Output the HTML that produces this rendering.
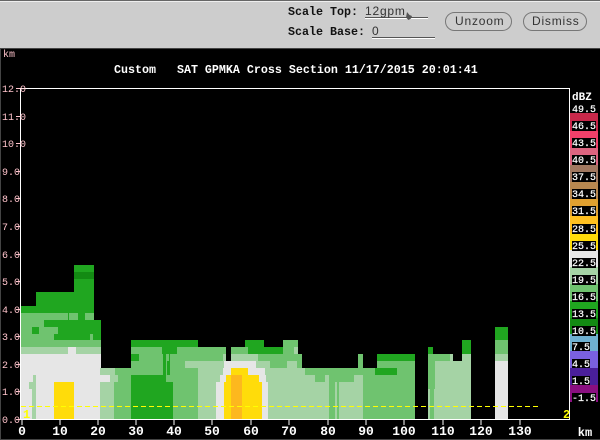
<!DOCTYPE html>
<html><head><meta charset="utf-8"><style>
html,body{margin:0;padding:0;background:#000;width:600px;height:440px;overflow:hidden}
svg{display:block}
text{white-space:pre}
.d{fill:#20a620}.k{fill:#138a13}.m{fill:#6fc36f}.l{fill:#a5d3a5}.g{fill:#e6e6e6}.y{fill:#ffdc0a}.o{fill:#fdb81e}.b{fill:#000}
.t{font:bold 11.67px "Liberation Mono",monospace;fill:#fff}
.x{font:bold 13px "Liberation Mono",monospace;fill:#fff;text-anchor:middle}
.p{font:10px "Liberation Mono",monospace;fill:#ffc4cc}
.c{font:10px "Liberation Mono",monospace;fill:#fff;stroke:#fff;stroke-width:.2px}
.h{font:bold 11.67px "Liberation Mono",monospace;fill:#111}
.s{font:12px "Liberation Sans",sans-serif;fill:#333;letter-spacing:.8px}
</style></head><body>
<svg width="600" height="440" viewBox="0 0 600 440" xmlns="http://www.w3.org/2000/svg">
<g shape-rendering="crispEdges">
<rect width="600" height="440" fill="#000"/>
<rect width="600" height="48" fill="#cdcdcd"/>
<rect width="600" height="1" fill="#666"/><rect y="1" width="600" height="1" fill="#eee"/>
<rect y="48" width="600" height="1" fill="#444"/>
<rect y="49" width="1" height="391" fill="#444"/><rect y="439" width="600" height="1" fill="#444"/>

<!-- left block -->
<rect class="d" x="74" y="265" width="20" height="7"/><rect class="k" x="74" y="272" width="20" height="7"/>
<rect class="d" x="74" y="279" width="20" height="13"/><rect class="d" x="36" y="292" width="58" height="14"/>
<rect class="d" x="21" y="306" width="73" height="7"/>
<rect class="m" x="21" y="313" width="47" height="7"/><rect class="d" x="68" y="313" width="1" height="7"/><rect class="m" x="69" y="313" width="9" height="7"/><rect class="d" x="78" y="313" width="7" height="7"/><rect class="m" x="85" y="313" width="9" height="7"/>
<rect class="m" x="21" y="320" width="23" height="7"/><rect class="d" x="44" y="320" width="57" height="7"/>
<rect class="m" x="21" y="327" width="37" height="7"/><rect class="d" x="32" y="327" width="7" height="7"/><rect class="d" x="58" y="327" width="43" height="7"/>
<rect class="m" x="21" y="334" width="33" height="6"/><rect class="d" x="54" y="334" width="36" height="6"/><rect class="m" x="90" y="334" width="3" height="6"/><rect class="d" x="93" y="334" width="8" height="6"/>
<rect class="m" x="21" y="340" width="80" height="7"/>
<rect class="l" x="21" y="347" width="47" height="7"/><rect class="g" x="68" y="347" width="8" height="7"/><rect class="l" x="76" y="347" width="25" height="7"/>
<rect class="g" x="21" y="354" width="80" height="65"/>
<rect class="l" x="33" y="375" width="3" height="7"/><rect class="l" x="29" y="382" width="7" height="7"/><rect class="l" x="32" y="389" width="4" height="30"/>
<rect class="y" x="54" y="382" width="20" height="37"/>
<!-- 100-150 -->
<rect class="l" x="100" y="368" width="15" height="7"/><rect class="g" x="100" y="375" width="10" height="7"/><rect class="l" x="110" y="375" width="8" height="7"/><rect class="l" x="100" y="382" width="14" height="37"/>
<rect class="m" x="115" y="368" width="16" height="7"/><rect class="m" x="118" y="375" width="13" height="7"/><rect class="m" x="114" y="382" width="17" height="37"/>
<rect class="d" x="131" y="375" width="19" height="44"/>
<rect class="d" x="131" y="340" width="19" height="7"/><rect class="m" x="131" y="347" width="19" height="28"/><rect class="d" x="131" y="354" width="8" height="7"/>
<!-- 150-300 -->
<rect class="d" x="150" y="340" width="48" height="7"/><rect class="d" x="245" y="340" width="19" height="7"/><rect class="m" x="283" y="340" width="15" height="7"/>
<rect class="m" x="150" y="347" width="12" height="7"/><rect class="d" x="162" y="347" width="15" height="7"/><rect class="m" x="177" y="347" width="49" height="7"/><rect class="m" x="231" y="347" width="17" height="7"/><rect class="d" x="248" y="347" width="35" height="7"/><rect class="m" x="283" y="347" width="11" height="7"/><rect class="l" x="294" y="347" width="4" height="7"/>
<rect class="m" x="150" y="354" width="73" height="7"/><rect class="d" x="163" y="354" width="3" height="7"/><rect class="d" x="169" y="354" width="1" height="7"/><rect class="l" x="223" y="354" width="3" height="7"/><rect class="l" x="231" y="354" width="27" height="7"/><rect class="m" x="258" y="354" width="44" height="7"/>
<rect class="m" x="150" y="361" width="35" height="7"/><rect class="d" x="163" y="361" width="3" height="7"/><rect class="d" x="167" y="361" width="3" height="7"/><rect class="l" x="185" y="361" width="39" height="7"/><rect class="g" x="224" y="361" width="32" height="7"/><rect class="l" x="256" y="361" width="14" height="7"/><rect class="m" x="270" y="361" width="17" height="7"/><rect class="l" x="287" y="361" width="10" height="7"/><rect class="m" x="297" y="361" width="5" height="7"/>
<rect class="m" x="150" y="368" width="48" height="7"/><rect class="d" x="163" y="368" width="3" height="7"/><rect class="d" x="167" y="368" width="3" height="7"/><rect class="l" x="198" y="368" width="25" height="7"/><rect class="g" x="223" y="368" width="8" height="7"/><rect class="y" x="231" y="368" width="17" height="7"/><rect class="g" x="248" y="368" width="17" height="7"/><rect class="l" x="265" y="368" width="40" height="7"/>
<rect class="d" x="150" y="375" width="16" height="7"/><rect class="m" x="166" y="375" width="32" height="7"/><rect class="l" x="198" y="375" width="22" height="7"/><rect class="g" x="220" y="375" width="6" height="7"/><rect class="y" x="226" y="375" width="5" height="7"/><rect class="o" x="231" y="375" width="11" height="7"/><rect class="y" x="242" y="375" width="17" height="7"/><rect class="g" x="259" y="375" width="7" height="7"/><rect class="l" x="266" y="375" width="49" height="7"/>
<rect class="d" x="150" y="382" width="23" height="37"/><rect class="m" x="173" y="382" width="25" height="37"/><rect class="l" x="198" y="382" width="18" height="37"/><rect class="g" x="216" y="382" width="8" height="37"/><rect class="y" x="224" y="382" width="7" height="37"/><rect class="o" x="231" y="382" width="11" height="37"/><rect class="y" x="242" y="382" width="20" height="37"/><rect class="g" x="262" y="382" width="6" height="37"/><rect class="l" x="268" y="382" width="61" height="37"/>
<!-- 300-415 -->
<rect class="m" x="305" y="368" width="58" height="7"/>
<rect class="m" x="315" y="375" width="10" height="7"/><rect class="l" x="325" y="375" width="4" height="7"/><rect class="m" x="329" y="375" width="11" height="7"/><rect class="m" x="340" y="375" width="14" height="7"/><rect class="l" x="354" y="375" width="9" height="7"/>
<rect class="m" x="329" y="382" width="6" height="37"/><rect class="l" x="335" y="382" width="2" height="37"/><rect class="m" x="337" y="382" width="2" height="37"/><rect class="l" x="339" y="382" width="24" height="37"/>
<rect class="m" x="358" y="354" width="5" height="14"/>
<rect class="m" x="363" y="368" width="52" height="51"/><rect class="d" x="375" y="368" width="22" height="7"/>
<rect class="d" x="377" y="354" width="38" height="7"/><rect class="m" x="377" y="361" width="38" height="7"/>
<!-- 428-471 -->
<rect class="d" x="428" y="347" width="5" height="7"/><rect class="m" x="428" y="354" width="22" height="14"/><rect class="l" x="435" y="361" width="18" height="58"/><rect class="m" x="428" y="361" width="7" height="28"/><rect class="l" x="428" y="389" width="7" height="30"/><rect class="m" x="430" y="389" width="4" height="30"/><rect class="l" x="450" y="354" width="3" height="7"/>
<rect class="l" x="453" y="361" width="18" height="58"/><rect class="d" x="462" y="340" width="9" height="14"/><rect class="l" x="462" y="354" width="9" height="7"/>
<!-- 495 -->
<rect class="d" x="495" y="327" width="13" height="13"/><rect class="m" x="495" y="340" width="13" height="14"/><rect class="l" x="495" y="354" width="13" height="7"/><rect class="g" x="495" y="361" width="13" height="58"/>
<!-- dashed -->
<path d="M21 406.500H538" stroke="#ffff00" stroke-width="1" stroke-dasharray="5 3" fill="none"/>
<!-- axes -->
<rect x="20" y="88" width="550" height="1" fill="#fff"/><rect x="20" y="88" width="1" height="332" fill="#fff"/><rect x="569" y="88" width="1" height="332" fill="#fff"/><rect x="20" y="419" width="550" height="1" fill="#fff"/>
<path d="M22 420v5M60 420v5M98 420v5M136 420v5M174 420v5M212 420v5M251 420v5M289 420v5M328 420v5M366 420v5M404 420v5M443 420v5M481 420v5M520 420v5" stroke="#fff" fill="none"/>
<path d="M16 419.500h4M16 391.500h4M16 364.500h4M16 336.500h4M16 309.500h4M16 281.500h4M16 254.500h4M16 226.500h4M16 198.500h4M16 171.500h4M16 143.500h4M16 116.500h4M16 88.500h4" stroke="#ffc4cc" fill="none"/>
<!-- colour bar -->
<rect x="570" y="113" width="28" height="18" fill="#c8284a"/><rect x="570" y="131" width="28" height="17" fill="#f0406a"/><rect x="570" y="148" width="28" height="17" fill="#dc6480"/><rect x="570" y="165" width="28" height="17" fill="#a07860"/><rect x="570" y="182" width="28" height="17" fill="#b88850"/><rect x="570" y="199" width="28" height="17" fill="#e0a030"/><rect x="570" y="216" width="28" height="17" fill="#ffc020"/><rect x="570" y="233" width="28" height="17" fill="#ffdc0a"/><rect x="570" y="250" width="28" height="17" fill="#e6e6e6"/><rect x="570" y="267" width="28" height="17" fill="#a5d3a5"/><rect x="570" y="284" width="28" height="17" fill="#6fc36f"/><rect x="570" y="301" width="28" height="17" fill="#20a620"/><rect x="570" y="318" width="28" height="16" fill="#138a13"/><rect x="570" y="334" width="28" height="17" fill="#6fb0d0"/><rect x="570" y="351" width="28" height="17" fill="#7a60e0"/><rect x="570" y="368" width="28" height="17" fill="#4a1f9a"/><rect x="570" y="385" width="28" height="17" fill="#8a0f80"/>
<g fill="#000"><rect x="572" y="121" width="24" height="10"/><rect x="572" y="138" width="24" height="10"/><rect x="572" y="155" width="24" height="10"/><rect x="572" y="172" width="24" height="10"/><rect x="572" y="189" width="24" height="10"/><rect x="572" y="206" width="24" height="10"/><rect x="572" y="224" width="24" height="10"/><rect x="572" y="241" width="24" height="10"/><rect x="572" y="258" width="24" height="10"/><rect x="572" y="275" width="24" height="10"/><rect x="572" y="292" width="24" height="10"/><rect x="572" y="309" width="24" height="10"/><rect x="572" y="326" width="24" height="10"/><rect x="572" y="342" width="18" height="9"/><rect x="572" y="359" width="18" height="9"/><rect x="572" y="376" width="18" height="9"/><rect x="572" y="393" width="24" height="9"/></g>
<!-- header controls -->
<rect x="365" y="17" width="63" height="1" fill="#555"/><rect x="365" y="18" width="63" height="1" fill="#fff"/>
<rect x="372" y="37" width="63" height="1" fill="#555"/><rect x="372" y="38" width="63" height="1" fill="#fff"/>
</g>
<rect x="445.500" y="12.500" width="66" height="18" rx="9" fill="#cdcdcd" stroke="#777"/>
<rect x="523.500" y="12.500" width="63" height="18" rx="9" fill="#cdcdcd" stroke="#777"/>
<path d="M407 12l2.500 3 2.500 1-1 2.500-2.500 1.500-2.500-2.500z" fill="#555"/>

<text class="h" x="288" y="15">Scale Top:</text>
<text class="h" x="288" y="35">Scale Base:</text>
<text class="s" x="365" y="15">12gpm</text>
<text class="s" x="372" y="35">0</text>
<text class="s" x="455" y="25">Unzoom</text>
<text class="s" x="532" y="25">Dismiss</text>
<text class="t" x="114" y="73">Custom   SAT GPMKA Cross Section 11/17/2015 20:01:41</text>
<text class="p" x="3" y="57">km</text>
<text class="p" x="2" y="423">0.0</text><text class="p" x="2" y="395">1.0</text><text class="p" x="2" y="368">2.0</text><text class="p" x="2" y="340">3.0</text><text class="p" x="2" y="313">4.0</text><text class="p" x="2" y="285">5.0</text><text class="p" x="2" y="258">6.0</text><text class="p" x="2" y="230">7.0</text><text class="p" x="2" y="202">8.0</text><text class="p" x="2" y="175">9.0</text><text class="p" x="2" y="147">10.0</text><text class="p" x="2" y="120">11.0</text><text class="p" x="2" y="92">12.0</text>
<text class="x" x="22" y="435">0</text><text class="x" x="60" y="435">10</text><text class="x" x="98" y="435">20</text><text class="x" x="136" y="435">30</text><text class="x" x="174" y="435">40</text><text class="x" x="212" y="435">50</text><text class="x" x="251" y="435">60</text><text class="x" x="289" y="435">70</text><text class="x" x="328" y="435">80</text><text class="x" x="366" y="435">90</text><text class="x" x="404" y="435">100</text><text class="x" x="443" y="435">110</text><text class="x" x="481" y="435">120</text><text class="x" x="520" y="435">130</text>
<text class="x" x="585" y="436" style="font-size:12px">km</text>
<text class="t" x="572" y="100" style="font-size:11px">dBZ</text>
<text class="c" x="572" y="112">49.5</text><text class="c" x="572" y="129">46.5</text><text class="c" x="572" y="146">43.5</text><text class="c" x="572" y="163">40.5</text><text class="c" x="572" y="180">37.5</text><text class="c" x="572" y="197">34.5</text><text class="c" x="572" y="214">31.5</text><text class="c" x="572" y="232">28.5</text><text class="c" x="572" y="249">25.5</text><text class="c" x="572" y="266">22.5</text><text class="c" x="572" y="283">19.5</text><text class="c" x="572" y="300">16.5</text><text class="c" x="572" y="317">13.5</text><text class="c" x="572" y="334">10.5</text><text class="c" x="572" y="350">7.5</text><text class="c" x="572" y="367">4.5</text><text class="c" x="572" y="384">1.5</text><text class="c" x="572" y="401">-1.5</text>
<text x="23" y="418" style="font:bold 12px 'Liberation Mono',monospace;fill:#ffff00">1</text>
<text x="563" y="418" style="font:bold 12px 'Liberation Mono',monospace;fill:#ffff00">2</text>
</svg>
</body></html>
